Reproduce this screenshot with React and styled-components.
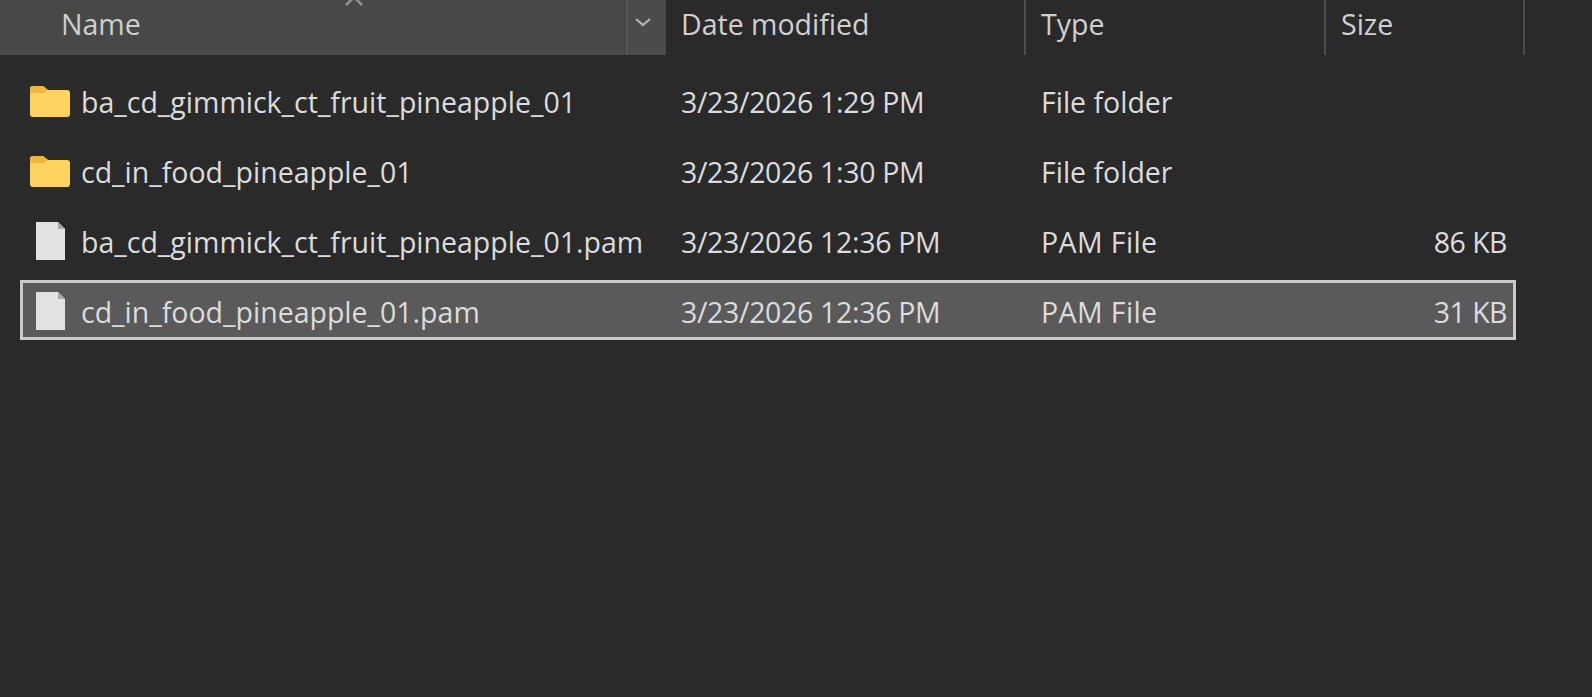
import React from "react"
import styled, { createGlobalStyle } from "styled-components"

const GlobalStyle = createGlobalStyle`
  html, body {
    margin: 0;
    padding: 0;
    background: #2a2a2a;
    overflow: hidden;
  }
`

// the reference is a soft video capture, hence the slight blur
const Page = styled.div`
  width: 1592px;
  height: 697px;
  background: #2a2a2a;
  color: #dcdcdc;
  font-family: "Open Sans", "Liberation Sans", sans-serif;
  font-size: 28.5px;
  filter: blur(0.5px);
`

const Header = styled.div`
  display: grid;
  grid-template-columns: 666px 360px 300px 199px;
  height: 55px;
`

const HeaderCell = styled.div`
  position: relative;
  display: flex;
  align-items: center;
  height: 55px;
  padding-left: ${(props) => props.$indent}px;
  padding-bottom: 8px;
  box-sizing: border-box;
  background: ${(props) => (props.$sorted ? "#484848" : "transparent")};
  border-right: ${(props) => (props.$sorted ? "none" : "2px solid #4d4d4d")};
  color: #cfcfcf;
`

const SortArrow = styled.svg`
  position: absolute;
  left: 343px;
  top: -7px;
`

const DropZone = styled.div`
  position: absolute;
  right: 0;
  top: 0;
  width: 40px;
  height: 55px;
  display: flex;
  align-items: center;
  justify-content: center;
  padding: 0 8px 11px 0;
  box-sizing: border-box;
  background: #4b4b4b;
  border-left: 2px solid #575757;
`

const List = styled.div`
  display: flex;
  flex-direction: column;
  gap: 10px;
  padding: 15px 0 0 20px;
`

const Row = styled.div`
  display: grid;
  grid-template-columns: 645px 360px 300px 180px;
  align-items: center;
  width: 1496px;
  height: 60px;
  padding-top: 2px;
  box-sizing: border-box;
  border: 3px solid ${(props) => (props.$selected ? "#cacaca" : "transparent")};
  background: ${(props) => (props.$selected ? "#5a5a5a" : "transparent")};
`

const NameCell = styled.div`
  display: flex;
  align-items: center;
  gap: 10px;
  padding-left: 6px;
  white-space: nowrap;
`

const IconSlot = styled.div`
  display: flex;
  justify-content: center;
  width: 42px;
`

const Label = styled.span`
  padding-top: 2px;
`

const Cell = styled.div`
  white-space: nowrap;
  padding: 2px 0 0 13px;
  letter-spacing: ${(props) => props.$tracking || 0}px;
`

const SizeCell = styled.div`
  white-space: nowrap;
  text-align: right;
  padding: 2px 1px 0 0;
  letter-spacing: -0.5px;
`

const FolderIcon = () => (
  <svg width="42" height="34" viewBox="0 0 42 34">
    <path d="M1 5a3 3 0 0 1 3-3h10l5 4h19a3 3 0 0 1 3 3v21a3 3 0 0 1-3 3H4a3 3 0 0 1-3-3z" fill="#fdd35f" />
    <path d="M1 5a3 3 0 0 1 3-3h10l5 4-5 3H1z" fill="#eeb63f" />
  </svg>
)

const FileIcon = () => (
  <svg width="32" height="40" viewBox="0 0 32 40">
    <path d="M2 1h22l7 7v31H2z" fill="#e2e2e2" />
    <path d="M24 1l7 7h-7z" fill="#a8a8a8" />
  </svg>
)

const rows = [
  { name: "ba_cd_gimmick_ct_fruit_pineapple_01", date: "3/23/2026 1:29 PM", type: "File folder", size: "", folder: true },
  { name: "cd_in_food_pineapple_01", date: "3/23/2026 1:30 PM", type: "File folder", size: "", folder: true },
  { name: "ba_cd_gimmick_ct_fruit_pineapple_01.pam", date: "3/23/2026 12:36 PM", type: "PAM File", size: "86 KB" },
  { name: "cd_in_food_pineapple_01.pam", date: "3/23/2026 12:36 PM", type: "PAM File", size: "31 KB", selected: true },
]

const App = () => (
  <Page>
    <GlobalStyle />
    <Header>
      <HeaderCell $sorted $indent={61}>
        Name
        <SortArrow width="22" height="14" viewBox="0 0 22 14">
          <path d="M3 12l8-8 8 8" fill="none" stroke="#8f8f8f" strokeWidth="2.5" />
        </SortArrow>
        <DropZone>
          <svg width="18" height="10" viewBox="0 0 18 10">
            <path d="M2 2l7 6 7-6" fill="none" stroke="#b4b4b4" strokeWidth="2.2" />
          </svg>
        </DropZone>
      </HeaderCell>
      <HeaderCell $indent={15}>Date modified</HeaderCell>
      <HeaderCell $indent={15}>Type</HeaderCell>
      <HeaderCell $indent={15}>Size</HeaderCell>
    </Header>
    <List>
      {rows.map((row) => (
        <Row key={row.name} $selected={row.selected}>
          <NameCell>
            <IconSlot>{row.folder ? <FolderIcon /> : <FileIcon />}</IconSlot>
            <Label>{row.name}</Label>
          </NameCell>
          <Cell $tracking={-0.33}>{row.date}</Cell>
          <Cell $tracking={row.folder ? 0 : 0.4}>{row.type}</Cell>
          <SizeCell>{row.size}</SizeCell>
        </Row>
      ))}
    </List>
  </Page>
)

export default App
